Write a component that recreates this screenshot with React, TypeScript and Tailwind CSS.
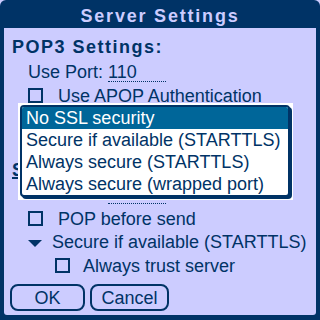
import React from "react";

const Check = () => (
  <span className="block w-[15px] h-[15px] border-2 border-[#003366] mt-[3px] shrink-0" />
);

const Tri = () => (
  <svg width="14" height="7" viewBox="0 0 14 7" className="mt-[9px] shrink-0">
    <polygon points="0,0 14,0 7,7" fill="#003366" />
  </svg>
);

export default function App() {
  return (
    <div className="relative w-[320px] h-[320px] bg-[#ccccff] font-['Liberation_Sans',Arial,sans-serif] text-[#003366]">
      <div className="flex flex-col h-full bg-[#003366] rounded-t-[6px]">
        <div className="h-[28px] pt-[5px] text-center font-bold text-[18px] leading-[22px] tracking-[1.8px] text-[#ccccff]">
          Server Settings
        </div>
        <div className="mx-[4px] mb-[5px] flex-1 bg-[#ccccff] rounded-b-[3px] flex flex-col pt-[8px] text-[18px] leading-[22px]">
          <div className="h-[25px] pl-[8px] font-bold text-[18px] tracking-[1.5px]">POP3 Settings:</div>
          <div className="h-[24px] pl-[24px] flex items-start">
            <span className="w-[80px]">Use Port:</span>
            <span className="w-[58px] h-[21px] border-b border-dotted border-[#003366]">110</span>
          </div>
          <div className="h-[23px] pl-[24px] flex items-start gap-[15px]">
            <Check />
            <span>Use APOP Authentication</span>
          </div>
          <div className="h-[51px]" />
          <div className="h-[24px] pl-[8px] font-bold text-[18px] tracking-[1.5px]">
            <span className="underline decoration-2 underline-offset-[1px]">S</span>MTP Settings:
          </div>
          <div className="h-[25px] pl-[104px] flex items-start">
            <span className="w-[58px] h-[21px] border-b border-dotted border-[#003366]" />
          </div>
          <div className="h-[23px] pl-[24px] flex items-start gap-[15px]">
            <Check />
            <span>POP before send</span>
          </div>
          <div className="h-[24px] pl-[24px] flex items-start gap-[10px]">
            <Tri />
            <span>Secure if available (STARTTLS)</span>
          </div>
          <div className="h-[29px] pl-[51px] flex items-start gap-[13px]">
            <Check />
            <span>Always trust server</span>
          </div>
          <div className="h-[27px] pl-[6px] flex gap-[5px]">
            <button className="w-[75px] h-[27px] border-2 border-[#003366] rounded-[8px] flex items-center justify-center">
              OK
            </button>
            <button className="w-[79px] h-[27px] border-2 border-[#003366] rounded-[8px] flex items-center justify-center">
              Cancel
            </button>
          </div>
        </div>
      </div>
      <div className="absolute left-[18px] top-[103px] w-[275px] h-[97px] bg-white pl-[2px] pt-[2px] text-[18px] leading-[22px]">
        <div className="w-[270px] border-2 border-[#003366] rounded-[4px] shadow-[2px_2px_0_#003366] overflow-hidden bg-white">
          <div className="h-[22px] pl-[4px] bg-[#006699] text-white">No SSL security</div>
          <div className="h-[22px] pl-[4px]">Secure if available (STARTTLS)</div>
          <div className="h-[22px] pl-[4px]">Always secure (STARTTLS)</div>
          <div className="h-[22px] pl-[4px]">Always secure (wrapped port)</div>
        </div>
      </div>
    </div>
  );
}
